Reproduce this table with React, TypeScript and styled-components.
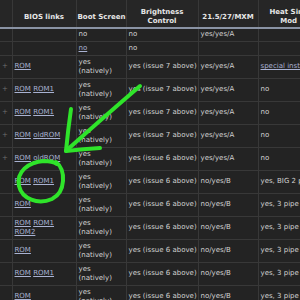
import React from "react";
import styled, { createGlobalStyle } from "styled-components";

type Cell = string | { link: string };

type Row = {
    plus?: boolean;
    bios: string[][];
    boot: Cell;
    bright: string;
    mxm: string;
    heat: Cell;
};

const NATIVE = "yes (natively)";

const rows: Row[] = [
    { bios: [], boot: "no", bright: "no", mxm: "yes/yes/A", heat: "" },
    { bios: [], boot: { link: "no" }, bright: "no", mxm: "", heat: "" },
    { plus: true, bios: [["ROM"]], boot: NATIVE, bright: "yes (issue 7 above)", mxm: "yes/yes/A", heat: { link: "special instructions" } },
    { plus: true, bios: [["ROM", "ROM1"]], boot: NATIVE, bright: "yes (issue 7 above)", mxm: "yes/yes/A", heat: "no" },
    { plus: true, bios: [["ROM", "ROM1"]], boot: NATIVE, bright: "yes (issue 7 above)", mxm: "yes/yes/A", heat: "no" },
    { plus: true, bios: [["ROM", "oldROM"]], boot: NATIVE, bright: "yes (issue 7 above)", mxm: "yes/yes/A", heat: "no" },
    { plus: true, bios: [["ROM", "oldROM"]], boot: NATIVE, bright: "yes (issue 6 above)", mxm: "yes/yes/A", heat: "no" },
    { bios: [["ROM", "ROM1"]], boot: NATIVE, bright: "yes (issue 6 above)", mxm: "no/yes/B", heat: "yes, BIG 2 pipe mod" },
    { bios: [["ROM"]], boot: NATIVE, bright: "yes (issue 6 above)", mxm: "no/yes/B", heat: "yes, 3 pipe mod" },
    { bios: [["ROM", "ROM1"], ["ROM2"]], boot: NATIVE, bright: "yes (issue 6 above)", mxm: "no/yes/B", heat: "yes, 3 pipe mod" },
    { bios: [["ROM"]], boot: NATIVE, bright: "yes (issue 6 above)", mxm: "no/yes/B", heat: "yes, 3 pipe mod" },
    { bios: [["ROM", "ROM1"]], boot: NATIVE, bright: "yes (issue 6 above)", mxm: "no/yes/B", heat: "yes, 3 pipe mod" },
    { bios: [["ROM"]], boot: NATIVE, bright: "yes (issue 6 above)", mxm: "no/yes/B", heat: "yes, 3 pipe mod" },
];

const renderCell = (cell: Cell) => (typeof cell === "string" ? cell : <Link href="#">{cell.link}</Link>);

export default function App() {
    return (
        <>
            <GlobalStyle />
            <Page>
                <Table>
                    <colgroup>
                        <col style={{ width: 12 }} />
                        <col style={{ width: 64 }} />
                        <col style={{ width: 50 }} />
                        <col style={{ width: 72 }} />
                        <col style={{ width: 60 }} />
                        <col style={{ width: 120 }} />
                    </colgroup>
                    <thead>
                        <tr>
                            <HeadCell />
                            <HeadCell>BIOS links</HeadCell>
                            <HeadCell>Boot Screen</HeadCell>
                            <HeadCell>
                                Brightness
                                <br />
                                Control
                            </HeadCell>
                            <HeadCell>21.5/27/MXM</HeadCell>
                            <HeadCell $align="left">
                                <HeatHead>
                                    Heat Sink
                                    <br />
                                    Mod
                                </HeatHead>
                            </HeadCell>
                        </tr>
                    </thead>
                    <tbody>
                        {rows.map((row, i) => (
                            <tr key={i}>
                                <PlusCell>{row.plus ? "+" : ""}</PlusCell>
                                <Td>
                                    {row.bios.map((line, j) => (
                                        <div key={j}>
                                            {line.map((name, k) => (
                                                <React.Fragment key={k}>
                                                    {k > 0 && " "}
                                                    <Link href="#">{name}</Link>
                                                </React.Fragment>
                                            ))}
                                        </div>
                                    ))}
                                </Td>
                                <Td>{renderCell(row.boot)}</Td>
                                <Td $nowrap>{row.bright}</Td>
                                <Td $nowrap>{row.mxm}</Td>
                                <Td $nowrap>{renderCell(row.heat)}</Td>
                            </tr>
                        ))}
                    </tbody>
                </Table>
                <Scribble viewBox="0 0 300 300" width="300" height="300">
                    <g fill="none" stroke="#2fe42a" strokeWidth="4" strokeLinecap="round" strokeLinejoin="round">
                        <path d="M140 86 Q105 116 67 150" />
                        <path d="M71 109 Q68 130 66 151" />
                        <path d="M66 151 Q84 149 100 148" />
                        <path d="M56 162 C66 170 66 192 52 199 C38 205 22 199 19 186 C16 172 28 162 44 161 C50 161 54 162 57 164" />
                    </g>
                </Scribble>
            </Page>
        </>
    );
}

const GlobalStyle = createGlobalStyle`
    html, body {
        margin: 0;
        padding: 0;
        background: #232323;
        overflow: hidden;
    }
`;

const Page = styled.div`
    position: relative;
    width: 300px;
    height: 300px;
    overflow: hidden;
    background: #232323;
`;

const Table = styled.table`
    table-layout: fixed;
    width: 378px;
    border-collapse: collapse;
    font-family: "DejaVu Sans", Verdana, sans-serif;
    font-size: 7px;
    line-height: 9.4px;
    color: #d2d2d2;
`;

const HeadCell = styled.th<{ $align?: string }>`
    padding: 8px 1px 0;
    font-weight: bold;
    color: #e6e6e6;
    white-space: nowrap;
    overflow: hidden;
    vertical-align: middle;
    text-align: ${props => props.$align ?? "center"};
    background: #262626;
    border-left: 1px solid #383838;
    border-bottom: 2px solid #8a93a4;
    &:first-child {
        border-left: none;
    }
`;

const HeatHead = styled.span`
    display: inline-block;
    text-align: center;
    padding-left: 10px;
`;

const Td = styled.td<{ $nowrap?: boolean }>`
    padding: 1.6px 2px;
    vertical-align: middle;
    text-align: left;
    white-space: ${props => (props.$nowrap ? "nowrap" : "normal")};
    overflow: hidden;
    border-left: 1px solid #383838;
    border-bottom: 1px solid #383838;
`;

const PlusCell = styled(Td)`
    color: #6e6e6e;
    padding: 0 0 0 2px;
    border-left: none;
`;

const Link = styled.a`
    color: #a9b2d2;
    text-decoration: underline;
`;

const Scribble = styled.svg`
    position: absolute;
    left: 0;
    top: 0;
    pointer-events: none;
`;
